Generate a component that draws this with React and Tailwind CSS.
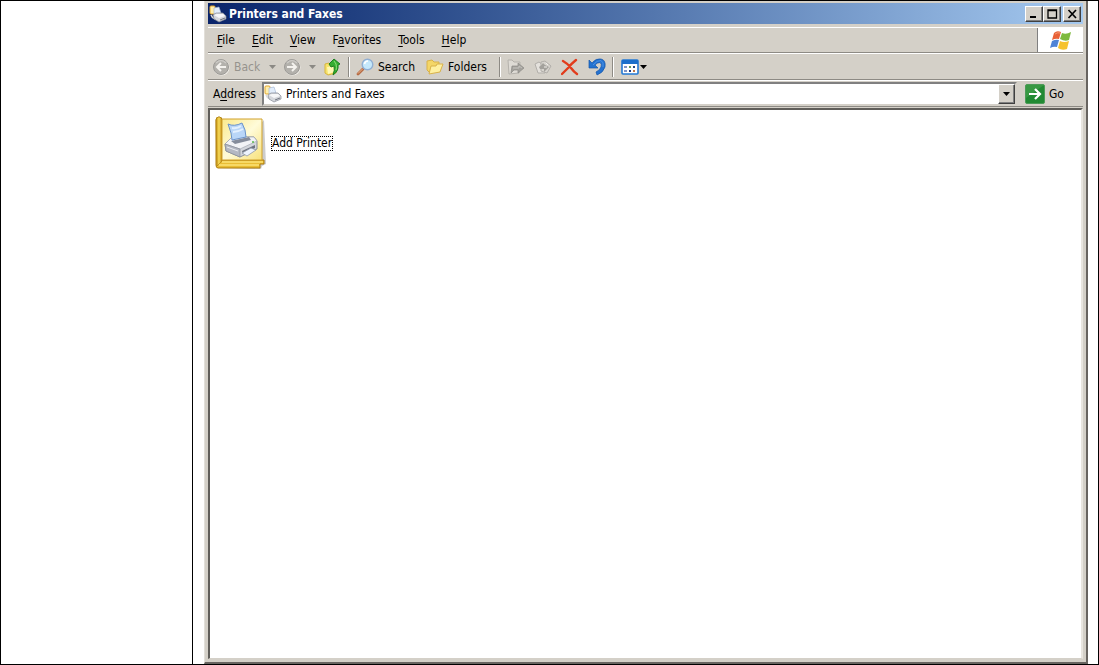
const menus = [
    { before: '', key: 'F', after: 'ile' },
    { before: '', key: 'E', after: 'dit' },
    { before: '', key: 'V', after: 'iew' },
    { before: 'F', key: 'a', after: 'vorites' },
    { before: '', key: 'T', after: 'ools' },
    { before: '', key: 'H', after: 'elp' },
];

function Printer() {
    return (
        <g strokeLinejoin="round">
            <path d="M1 22 L8 15 L30 15 L33 19 L33 27 L16 35 L2 29 Z" fill="#d3d6dc" stroke="#8a8f9a" />
            <path d="M1 22 L8 15 L30 15 L33 19 L16 27 Z" fill="#f2f3f6" stroke="#a5a9b3" strokeWidth="0.7" />
            <path d="M7 19 L25 15 L27 18 L11 22 Z" fill="#858c9b" />
            <path d="M8 18 Q8 12 4 2 Q10 5 18 1 Q22 8 22 15 Z" fill="#b9d6f8" stroke="#6b93c9" />
            <path d="M8 6 Q13 7 17 4 M9 10 Q14 10 19 7" fill="none" stroke="#e3f0ff" strokeWidth="1.8" />
            <path d="M1 22 L16 27 L16 35 L2 29 Z" fill="#b4b8c3" stroke="#8a8f9a" strokeWidth="0.7" />
            <path d="M18 29 L31 23 L31 26 L19 32 Z" fill="#6e7380" />
            <path d="M18 31 L27 26 L32 28 L23 34 Z" fill="#edf3fd" stroke="#9299a8" strokeWidth="0.8" />
            <path d="M3 25 L14 29" stroke="#e9ebef" />
            <circle cx="29" cy="20" r="1" fill="#57b84a" />
        </g>
    );
}

function PrintersIcon() {
    return (
        <svg className="h-[18px] w-[18px] shrink-0" viewBox="0 0 18 18">
            <rect x="1" y="1" width="5" height="8" rx="1" fill="#ffefae" stroke="#e0a52c" />
            <path d="M2 10 Q3 13 6 14" fill="none" stroke="#d9d9d9" strokeWidth="1.5" />
            <path d="M5 9 L5 3 L10 2 L12 8 Z" fill="#e2edfb" stroke="#9cb0cf" strokeWidth="0.6" />
            <path d="M4 10 L7 8 L14 8 L17 11 L17 14 L10 17 L5 14 Z" fill="#d5d7dc" stroke="#868b95" strokeWidth="0.7" />
            <path d="M5 10 L8 9 L14 9 L16 11 L10 13 Z" fill="#f7f7f9" />
            <path d="M11 15 L16 13" stroke="#6f7480" />
        </svg>
    );
}

function AddPrinterIcon() {
    return (
        <svg className="h-[54px] w-[52px] shrink-0" viewBox="0 0 52 54">
            <defs>
                <linearGradient id="page" x1="0" y1="0" x2="1" y2="1">
                    <stop offset="0" stopColor="#fbe98c" />
                    <stop offset=".5" stopColor="#fffbd9" />
                    <stop offset="1" stopColor="#f8e17a" />
                </linearGradient>
                <linearGradient id="spine">
                    <stop offset="0" stopColor="#c4920f" />
                    <stop offset=".5" stopColor="#f9dc5c" />
                    <stop offset="1" stopColor="#c08a14" />
                </linearGradient>
            </defs>
            <path d="M4 52 L46 53 L47 50 L51 48 L49 4" fill="#aaa" opacity=".6" />
            <path d="M1 4 Q1 1 4 1 Q7 1 7 4 L7 44 L49 44 L49 48 L45 48 L45 52 L3 52 Q1 52 1 49 Z" fill="#e9bd35" stroke="#ad7d10" />
            <path d="M1 4 Q1 1 4 1 Q7 1 7 4 L7 45 L2 50 Z" fill="url(#spine)" stroke="#ad7d10" strokeWidth="0.6" />
            <path d="M7 3 L47 3 L47 44 L7 44 Z" fill="url(#page)" stroke="#d0a02b" />
            <path d="M4 49 L44 49 M7 46 L48 46" stroke="#fbe276" strokeWidth="1.6" />
            <g transform="translate(9 6)">
                <Printer />
            </g>
        </svg>
    );
}

function ArrowCircle({ forward }) {
    return (
        <svg className="h-[18px] w-[18px] shrink-0" viewBox="0 0 18 18">
            <circle cx="9.5" cy="9.5" r="8" fill="#f0eee9" />
            <circle cx="9" cy="9" r="7.5" fill="#b3b1ac" stroke="#9c9a96" />
            <path d="M4 5 Q9 0 14 5" fill="none" stroke="#cccac6" strokeWidth="1.5" />
            <path
                d={forward ? 'M4 9 H13 M9 5 L13 9 L9 13' : 'M14 9 H5 M9 5 L5 9 L9 13'}
                fill="none"
                stroke="#f4f2ee"
                strokeWidth="2"
            />
        </svg>
    );
}

function UpIcon() {
    return (
        <svg className="h-[18px] w-[18px]" viewBox="0 0 18 18">
            <path d="M1 6 L5 5 L7 7 L12 6 L12 15 L4 17 L1 15 Z" fill="#f7e26b" stroke="#d8b53c" />
            <path d="M3 9 L10 8 L10 14 L4 16 Z" fill="#fff8b4" />
            <path d="M10 1 L16 6 L14 7 Q15 13 9 17 Q11 12 10 8 L7 9 L5 6 Z" fill="#35ad32" stroke="#147818" strokeWidth="0.9" />
            <path d="M10 3 L12 6 Q13 10 12 12" fill="none" stroke="#8ee077" />
        </svg>
    );
}

function SearchIcon() {
    return (
        <svg className="h-[18px] w-[18px]" viewBox="0 0 18 18">
            <path d="M7 11 L2 16" stroke="#b56a42" strokeWidth="2.8" strokeLinecap="round" />
            <path d="M7 10.5 L2 15.5" stroke="#eab38c" strokeWidth="1" />
            <circle cx="11.5" cy="6.5" r="5.3" fill="#c5e8fb" stroke="#91afd3" strokeWidth="1.4" />
            <path d="M8.5 6 Q9 3 12 3" stroke="#fff" strokeWidth="1.6" fill="none" />
        </svg>
    );
}

function FoldersIcon() {
    return (
        <svg className="h-[18px] w-[18px]" viewBox="0 0 18 18">
            <path d="M1 3 L6 2 L8 4 L13 4 L13 12 L3 14 L1 12 Z" fill="#f4d667" stroke="#d9b24a" />
            <path d="M5 8 L10 8 L11 6 L17 6 L14 14 L3 16 Z" fill="#fff0a0" stroke="#d9b24a" strokeLinejoin="round" />
        </svg>
    );
}

function MoveIcon() {
    return (
        <svg className="h-[18px] w-[18px]" viewBox="0 0 18 18">
            <path d="M1 2 L5 2 L7 4 L13 4 L12 15 L2 16 Z" fill="#dedbd5" stroke="#b5b2ac" />
            <path d="M4 15 L5 8 H11 V5 L17 10 L11 15 V12 H7 Z" fill="#a3a19c" stroke="#8d8b87" strokeWidth="0.7" />
            <path d="M6 10 H12 V8 L15 10" fill="none" stroke="#c5c3be" />
        </svg>
    );
}

function CopyIcon() {
    return (
        <svg className="h-[18px] w-[18px]" viewBox="0 0 18 18">
            <path d="M1 6 L5 4 L10 8 L11 15 L4 15 Z" fill="#e4e1dc" stroke="#b2afaa" />
            <path d="M7 4 L11 3 L17 8 L13 15 L7 13 Z" fill="#d7d4ce" stroke="#b2afaa" />
            <path d="M5 9 Q8 7 9 5 L11 7 L15 9 L10 14 V11 H6 Z" fill="#a3a19c" />
            <path d="M12 5 L14 7 M10 9 L13 9" stroke="#f1efea" />
        </svg>
    );
}

function DeleteIcon() {
    return (
        <svg className="h-[18px] w-[18px]" viewBox="0 0 18 18">
            <path d="M2 3 Q6 5 10 10 Q13 14 16 16 M15 2 Q10 6 7 10 Q4 13 1 16" fill="none" stroke="#e23c1c" strokeWidth="2.4" strokeLinecap="round" />
        </svg>
    );
}

function UndoIcon() {
    return (
        <svg className="h-[18px] w-[18px]" viewBox="0 0 18 18">
            <path d="M1 2 L1 10 L10 10 L7 7 Q9 4.500 12 4.500 Q14 6 13 9 Q12 12 8 14 L9 17 Q15 15 17 9 Q18 2 13 1 Q8 0 4 5 Z" fill="#2472d0" stroke="#1656ab" strokeWidth="0.7" />
            <path d="M5 7 Q9 2 13 2.500 Q16 4 15 9" fill="none" stroke="#4b91e4" />
        </svg>
    );
}

function ViewsIcon() {
    return (
        <svg className="h-[18px] w-[18px]" viewBox="0 0 18 18">
            <rect x="1" y="2" width="16" height="14" rx="1" fill="#fff" stroke="#2278d4" strokeWidth="1.6" />
            <path d="M1 4 H17" stroke="#1c6fcb" strokeWidth="4" />
            <path d="M3 9 H6 M3 13 H6" stroke="#7f94c6" strokeWidth="2" />
            <path d="M8 9 H10" stroke="#659b55" strokeWidth="2" />
            <path d="M8 13 H10" stroke="#193b87" strokeWidth="2" />
            <path d="M12 9 H14" stroke="#274783" strokeWidth="2" />
            <path d="M12 13 H14" stroke="#bd7547" strokeWidth="2" />
        </svg>
    );
}

function WindowsLogo() {
    return (
        <svg className="h-[22px] w-[24px]" viewBox="0 0 24 22">
            <path d="M5 4 Q8 1 12 3 L10 10 Q7 9 3 11 Z" fill="#e86137" />
            <path d="M13 4 Q17 6 22 3 L20 11 Q16 13 11 10 Z" fill="#7fba3e" />
            <path d="M3 12 Q7 10 10 11 L8 18 Q5 17 1 19 Z" fill="#4f83d6" />
            <path d="M11 12 Q15 14 20 12 L18 20 Q13 22 9 19 Z" fill="#f6c22d" />
            <path d="M6 5 Q9 3 11 4" fill="none" stroke="#f59a73" />
        </svg>
    );
}

function GoIcon() {
    return (
        <svg className="h-[20px] w-[20px]" viewBox="0 0 20 20">
            <rect x=".5" y=".5" width="19" height="19" rx="1.500" fill="#218a33" stroke="#4c9b58" />
            <path d="M1 1 H19 L1 14 Z" fill="#48a450" opacity=".6" />
            <path d="M4 10 H15 M10 5 L15 10 L10 15" fill="none" stroke="#fff" strokeWidth="2.200" />
        </svg>
    );
}

function Caret({ muted }) {
    return (
        <svg className="h-1 w-[7px] shrink-0" viewBox="0 0 7 4">
            <path d="M0 0 H7 L3.500 4 Z" fill={muted ? '#8b8984' : '#000'} />
        </svg>
    );
}

function Separator() {
    return <div className="h-5 w-[2px] shrink-0 border-r border-l border-r-white border-l-[#8d8a84]" />;
}

function CaptionButton({ label, children }) {
    return (
        <button
            aria-label={label}
            className="flex h-4 w-[18px] items-center justify-center border border-t-white border-r-[#404040] border-b-[#404040] border-l-white bg-[#d4d0c8] shadow-[inset_-1px_-1px_0_#808080]"
        >
            <svg className="h-[10px] w-[11px]" viewBox="0 0 11 10">
                {children}
            </svg>
        </button>
    );
}

function TitleBar() {
    return (
        <header className="flex h-[21px] items-center bg-linear-to-r from-[#0a246a] to-[#a6caf0] pr-[2px] pl-[1px] text-white">
            <PrintersIcon />
            <h1 className="ml-[2px] flex-1 text-[12px] font-bold">Printers and Faxes</h1>
            <CaptionButton label="Minimize">
                <path d="M1 8 H7" stroke="#000" strokeWidth="2" />
            </CaptionButton>
            <CaptionButton label="Maximize">
                <path d="M1 1 H9.500 V9 H1 Z M1 1.500 H9" fill="none" stroke="#000" strokeWidth="1.300" />
            </CaptionButton>
            <div className="w-[2px]" />
            <CaptionButton label="Close">
                <path d="M1.500 1 L9 9 M9 1 L1.500 9" stroke="#000" strokeWidth="1.700" />
            </CaptionButton>
        </header>
    );
}

function MenuBar() {
    return (
        <div className="flex h-[26px] border-t border-b border-t-white border-b-[#8d8a84]">
            <nav className="flex flex-1 items-center gap-[17px] pl-[9px]">
                {menus.map((menu) => (
                    <button key={menu.key}>
                        {menu.before}
                        <span className="underline underline-offset-2">{menu.key}</span>
                        {menu.after}
                    </button>
                ))}
            </nav>
            <div className="flex w-[46px] items-center justify-center border-l border-[#808080] bg-white">
                <WindowsLogo />
            </div>
        </div>
    );
}

function Toolbar() {
    return (
        <div className="flex h-[27px] items-center border-t border-b border-t-white border-b-[#8d8a84] pl-1">
            <button disabled className="flex w-[50px] items-center gap-1 text-[#96938d]">
                <ArrowCircle />
                Back
            </button>
            <button disabled aria-label="Back history" className="flex w-[21px] justify-center">
                <Caret muted />
            </button>
            <button disabled aria-label="Forward" className="w-[18px]">
                <ArrowCircle forward />
            </button>
            <button disabled aria-label="Forward history" className="flex w-[23px] justify-center">
                <Caret muted />
            </button>
            <button aria-label="Up" className="w-6">
                <UpIcon />
            </button>
            <Separator />
            <button className="ml-[6px] flex w-[70px] items-center gap-1">
                <SearchIcon />
                Search
            </button>
            <button className="flex w-[73px] items-center gap-1">
                <FoldersIcon />
                Folders
            </button>
            <Separator />
            <div className="flex gap-[9px] px-[6px]">
                <button disabled aria-label="Move To"><MoveIcon /></button>
                <button disabled aria-label="Copy To"><CopyIcon /></button>
                <button aria-label="Delete"><DeleteIcon /></button>
                <button aria-label="Undo"><UndoIcon /></button>
            </div>
            <Separator />
            <button aria-label="Views" className="ml-[7px] flex items-center gap-[1px]">
                <ViewsIcon />
                <Caret />
            </button>
        </div>
    );
}

function AddressBar() {
    return (
        <div className="flex h-[27px] items-center border-t border-b border-t-white border-b-[#8d8a84] pl-[5px]">
            <label htmlFor="address" className="w-[49px]">
                A<span className="underline underline-offset-2">d</span>dress
            </label>
            <div className="flex h-6 flex-1 items-center border-2 border-t-[#808080] border-r-[#d4d0c8] border-b-[#d4d0c8] border-l-[#808080] bg-white">
                <PrintersIcon />
                <input id="address" defaultValue="Printers and Faxes" className="ml-1 min-w-0 flex-1 bg-white outline-none" />
                <button
                    aria-label="Show addresses"
                    className="flex h-5 w-[17px] items-center justify-center border border-t-white border-r-[#404040] border-b-[#404040] border-l-white bg-[#d4d0c8] shadow-[inset_-1px_-1px_0_#808080]"
                >
                    <Caret />
                </button>
            </div>
            <button className="ml-2 flex w-[58px] items-center gap-1">
                <GoIcon />
                Go
            </button>
        </div>
    );
}

export default function App() {
    return (
        <div className="grid min-h-screen grid-cols-[192px_1fr] border border-black bg-white font-['DejaVu_Sans_Condensed','DejaVu_Sans',sans-serif] text-[12px] leading-4 text-black [font-stretch:condensed]">
            <aside className="border-r border-black" />
            <div className="flex pr-[10px] pl-[11px]">
                <div className="flex flex-1 flex-col border-r-2 border-b-2 border-l border-r-[#686460] border-b-[#686460] border-l-[#e2dfd9] bg-[#d4d0c8] px-[3px] pt-[2px] pb-[3px]">
                    <TitleBar />
                    <div className="mt-[3px] flex flex-1 flex-col">
                        <MenuBar />
                        <Toolbar />
                        <AddressBar />
                        <main className="mt-[1px] flex-1 border-t-2 border-r-2 border-b border-l-2 border-t-[#605e5a] border-r-[#e8e5df] border-b-[#d4d0c8] border-l-[#605e5a] bg-white pt-[6px] pl-[5px]">
                            <button className="flex items-center gap-1">
                                <AddPrinterIcon />
                                <span className="border border-dotted border-black leading-[13px]">Add Printer</span>
                            </button>
                        </main>
                    </div>
                </div>
            </div>
        </div>
    );
}
